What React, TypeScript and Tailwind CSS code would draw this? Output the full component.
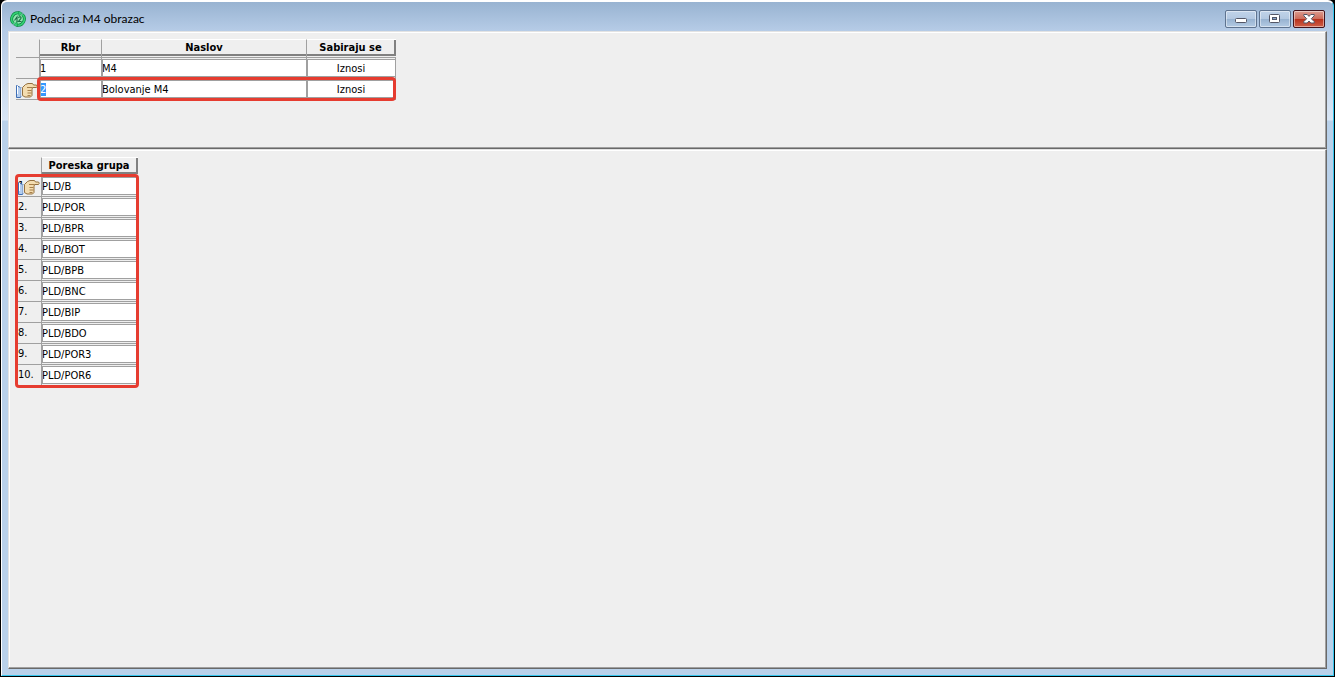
import React, { useEffect, useRef } from 'react';

const forms = [
  { rbr: '1', title: 'M4', sum: 'Iznosi' },
  { rbr: '2', title: 'Bolovanje M4', sum: 'Iznosi' },
];

const groups = [
  'PLD/B',
  'PLD/POR',
  'PLD/BPR',
  'PLD/BOT',
  'PLD/BPB',
  'PLD/BNC',
  'PLD/BIP',
  'PLD/BDO',
  'PLD/POR3',
  'PLD/POR6',
];

const panel =
  'border border-t-[#e3e3e3] border-l-[#e3e3e3] border-r-[#696969] border-b-[#696969] bg-[#efefef] shadow-[inset_-1px_-1px_0_#a0a0a0,inset_1px_1px_0_#ffffff]';
const headCell =
  'border-t border-l border-t-white border-l-[#a0a0a0] p-0 pb-px text-center font-bold';
const headLabel =
  'h-4 border-b-2 border-[#808080] leading-[15px]';
const bodyCell = 'h-[21px] border-t border-l border-[#a0a0a0] p-0 pt-px align-top';
const field =
  'block h-[18px] w-full border border-r-0 border-[#a0a0a0] bg-white -indent-px leading-4 outline-none selection:bg-[#3399ff] selection:text-white';

function AppIcon() {
  return (
    <svg viewBox="0 0 16 16" className="h-4 w-4" fill="none">
      <circle cx="8" cy="8" r="5.500" fill="#8fe5b0" />
      <path d="M3.500 12.500A6.200 6.200 0 0 1 9 2" stroke="#0f8a43" strokeWidth="3" />
      <path d="M12.500 3.500A6.200 6.200 0 0 1 7 14" stroke="#0f8a43" strokeWidth="3" />
      <path d="M3.500 12.500A6.200 6.200 0 0 1 9 2" stroke="#35d276" strokeWidth="1.500" />
      <path d="M12.500 3.500A6.200 6.200 0 0 1 7 14" stroke="#35d276" strokeWidth="1.500" />
      <path d="M8.500 0l4 2.200-3.500 3zM7.500 16l-4-2.200 3.500-3z" fill="#35d276" stroke="#0f8a43" strokeWidth=".6" />
      <path d="M4.500 9.500l2.500-3.500v5M8.500 7c.6-2 3.500-1.200 2.300.6L8.500 10.500h3" stroke="#1c6b45" strokeWidth="1.100" />
    </svg>
  );
}

function HandPointer() {
  return (
    <svg viewBox="0 0 22 17" className="h-[17px] w-[22px]">
      <path d="M.5 3.500v12h4v-10z" fill="#b4cdee" stroke="#3f6fb5" />
      <path d="M1.500 4v8" stroke="#fff" />
      <path d="M4.500 5.500v9h1.500v-9z" fill="#fff" stroke="#8aa6cf" strokeWidth=".6" />
      <path
        d="M6.500 5.500l3-3 2.500-1h4.500l1 1.500h3q1.500 1.200 0 2.500h-4l-.5 2v6l-1.500 1.500H9l-2.500-1.500z"
        fill="#f3dcb0"
        stroke="#94703f"
      />
      <path d="M11 5.500h5M11.500 8.500h4M11.500 11h4M11.500 13.500h3" stroke="#a77f4a" />
    </svg>
  );
}

function WindowButtons() {
  const base =
    'flex h-[18px] w-8 items-center justify-center rounded-[2px] border shadow-[inset_0_0_0_1px_rgba(255,255,255,0.45)]';
  const plain =
    'border-[#5e738f] bg-[linear-gradient(#c0d3e9_0%,#b3c8e1_50%,#97b2d0_51%,#b4cbe4_100%)]';
  return (
    <div className="flex gap-[2px] pr-[2px]">
      <button type="button" aria-label="Minimize" className={`${base} ${plain}`}>
        <svg viewBox="0 0 12 12" className="h-3 w-3">
          <rect x=".5" y="5.500" width="11" height="4" rx="1" fill="#fff" stroke="#535666" />
        </svg>
      </button>
      <button type="button" aria-label="Maximize" className={`${base} ${plain}`}>
        <svg viewBox="0 0 12 10" className="h-[10px] w-3">
          <rect x=".5" y=".5" width="10" height="8" rx="1" fill="#fff" stroke="#535666" />
          <rect x="3.500" y="3.500" width="4" height="2" fill="#86a6cc" stroke="#535666" />
        </svg>
      </button>
      <button
        type="button"
        aria-label="Close"
        className={`${base} border-[#43131b] bg-[linear-gradient(#dc9c90_0%,#cd6a58_50%,#b8301b_51%,#cf5f48_100%)]`}
      >
        <svg viewBox="0 0 12 10" className="h-[10px] w-3">
          <path
            d="M.8.5h3.400L6 2.400 7.800.5h3.400v1.300L8.300 4.700l2.900 2.900v1.400H7.800L6 7 4.200 9H.8V7.600l2.900-2.900L.8 1.800z"
            fill="#fff"
            stroke="#535666"
          />
        </svg>
      </button>
    </div>
  );
}

export default function App() {
  const current = useRef<HTMLInputElement>(null);

  useEffect(() => {
    current.current?.focus();
    current.current?.select();
  }, []);

  return (
    <div className="flex min-h-screen flex-col bg-black px-px pb-px text-[11px] text-black [font-family:'DejaVu_Sans_Condensed','DejaVu_Sans',sans-serif]">
      <div className="flex grow flex-col rounded-t-[6px] border border-t-2 border-t-white border-r-[#35c6ee] border-b-[#35c6ee] border-l-white bg-[#b9d1ea] bg-[linear-gradient(#98b3d1,#b5cbe6_28px,#d9e6f5_118px,#b9d1ea_119px)] px-[6px] pb-[6px]">
        <header className="flex h-[29px] items-center justify-between pt-[5px] pl-[2px]">
          <div className="flex items-center gap-1">
            <AppIcon />
            <h1 className="text-xs [font-family:Lato,sans-serif]">Podaci za M4 obrazac</h1>
          </div>
          <WindowButtons />
        </header>

        <main className="flex grow flex-col">
          <section className={`${panel} h-[118px] pt-[7px] pl-[7px]`}>
            <div className="relative w-[380px]">
              <table className="w-full table-fixed border-separate border-spacing-0 border-b border-[#a0a0a0]">
                <thead>
                  <tr>
                    <th className="w-[23px] p-0" />
                    <th className={`${headCell} w-[62px]`}>
                      <div className={headLabel}>Rbr</div>
                    </th>
                    <th className={`${headCell} w-[205px]`}>
                      <div className={headLabel}>Naslov</div>
                    </th>
                    <th className={headCell}>
                      <div className={`${headLabel} border-r-2`}>Sabiraju se</div>
                    </th>
                  </tr>
                </thead>
                <tbody>
                  {forms.map((form, i) => (
                    <tr key={form.rbr}>
                      <td className="border-t border-[#a0a0a0] p-0 align-bottom">
                        {i === 1 && <HandPointer />}
                      </td>
                      <td className={bodyCell}>
                        <input
                          ref={i === 1 ? current : undefined}
                          aria-label="Rbr"
                          defaultValue={form.rbr}
                          className={field}
                        />
                      </td>
                      <td className={bodyCell}>
                        <input aria-label="Naslov" defaultValue={form.title} className={field} />
                      </td>
                      <td className={`${bodyCell} border-r`}>
                        <input
                          aria-label="Sabiraju se"
                          defaultValue={form.sum}
                          className={`${field} text-center`}
                        />
                      </td>
                    </tr>
                  ))}
                </tbody>
              </table>
              <div className="pointer-events-none absolute right-0 -bottom-px left-[21px] h-6 rounded-[4px] border-3 border-[#e63c30]" />
            </div>
          </section>

          <section className={`${panel} grow pt-[7px] pl-[7px]`}>
            <div className="relative w-[122px]">
              <table className="w-full table-fixed border-separate border-spacing-0 border-b border-[#a0a0a0]">
                <thead>
                  <tr>
                    <th className="w-[25px] p-0" />
                    <th className={headCell}>
                      <div className={`${headLabel} border-r-2`}>Poreska grupa</div>
                    </th>
                  </tr>
                </thead>
                <tbody>
                  {groups.map((group, i) => (
                    <tr key={group}>
                      <td className="relative border-t border-[#a0a0a0] p-0 pl-[2px] align-top leading-5 whitespace-nowrap">
                        {i + 1}.
                        {i === 0 && (
                          <span className="absolute bottom-0 left-[2px]">
                            <HandPointer />
                          </span>
                        )}
                      </td>
                      <td className={`${bodyCell} border-r`}>
                        <input aria-label="Poreska grupa" defaultValue={group} className={field} />
                      </td>
                    </tr>
                  ))}
                </tbody>
              </table>
              <div className="pointer-events-none absolute -right-px -bottom-[2px] -left-px h-[214px] rounded-[4px] border-3 border-[#e63c30]" />
            </div>
          </section>
        </main>
      </div>
    </div>
  );
}
